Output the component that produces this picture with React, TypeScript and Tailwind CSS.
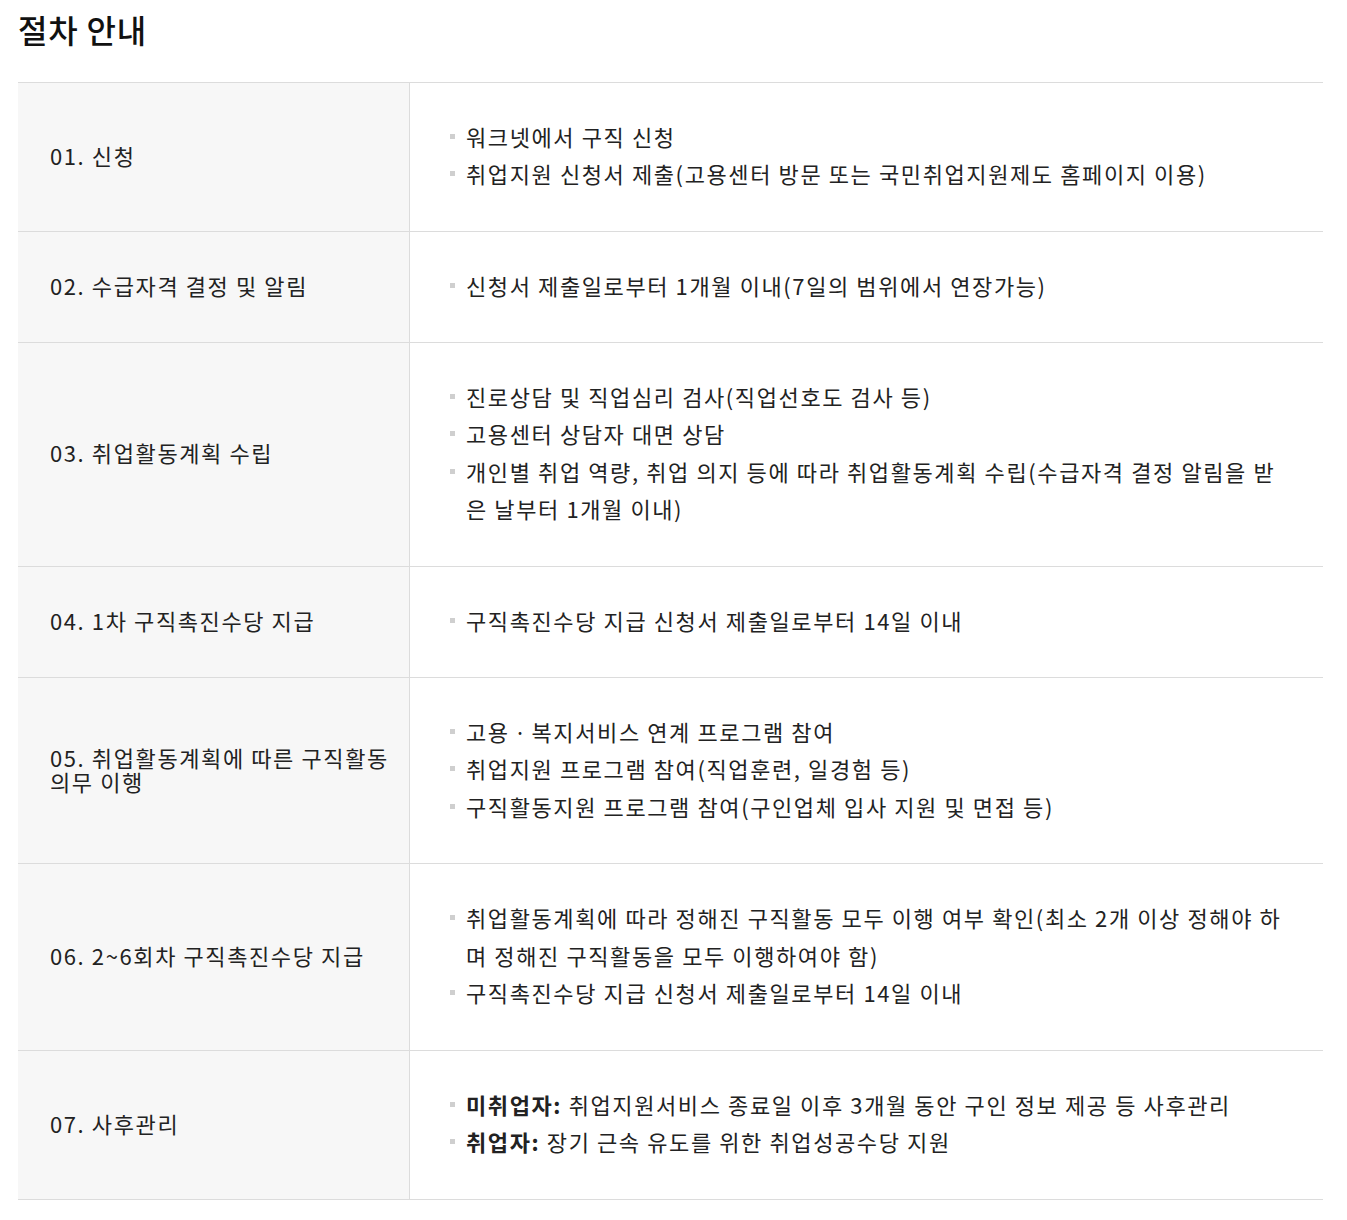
import React from 'react';

type Item = { bold?: string; text: string };
type Step = { title: string; items: Item[] };

const steps: Step[] = [
  {
    title: '01. 신청',
    items: [
      { text: '워크넷에서 구직 신청' },
      { text: '취업지원 신청서 제출(고용센터 방문 또는 국민취업지원제도 홈페이지 이용)' },
    ],
  },
  {
    title: '02. 수급자격 결정 및 알림',
    items: [{ text: '신청서 제출일로부터 1개월 이내(7일의 범위에서 연장가능)' }],
  },
  {
    title: '03. 취업활동계획 수립',
    items: [
      { text: '진로상담 및 직업심리 검사(직업선호도 검사 등)' },
      { text: '고용센터 상담자 대면 상담' },
      {
        text: '개인별 취업 역량, 취업 의지 등에 따라 취업활동계획 수립(수급자격 결정 알림을 받은 날부터 1개월 이내)',
      },
    ],
  },
  {
    title: '04. 1차 구직촉진수당 지급',
    items: [{ text: '구직촉진수당 지급 신청서 제출일로부터 14일 이내' }],
  },
  {
    title: '05. 취업활동계획에 따른 구직활동 의무 이행',
    items: [
      { text: '고용ㆍ복지서비스 연계 프로그램 참여' },
      { text: '취업지원 프로그램 참여(직업훈련, 일경험 등)' },
      { text: '구직활동지원 프로그램 참여(구인업체 입사 지원 및 면접 등)' },
    ],
  },
  {
    title: '06. 2~6회차 구직촉진수당 지급',
    items: [
      {
        text: '취업활동계획에 따라 정해진 구직활동 모두 이행 여부 확인(최소 2개 이상 정해야 하며 정해진 구직활동을 모두 이행하여야 함)',
      },
      { text: '구직촉진수당 지급 신청서 제출일로부터 14일 이내' },
    ],
  },
  {
    title: '07. 사후관리',
    items: [
      { bold: '미취업자:', text: ' 취업지원서비스 종료일 이후 3개월 동안 구인 정보 제공 등 사후관리' },
      { bold: '취업자:', text: ' 장기 근속 유도를 위한 취업성공수당 지원' },
    ],
  },
];

export default function App() {
  return (
    <div
      className="min-h-[1220px] bg-white text-[#222]"
      style={{ fontFamily: '"Noto Sans CJK KR", "Noto Sans", sans-serif' }}
    >
      <div className="ml-[18px] w-[1305px] pt-[9px]">
        <h2 className="text-[32px] leading-[40px] font-medium text-[#111] tracking-[0.8px]">절차 안내</h2>

        <div className="mt-[33px] border-t border-[#dcdcdc]">
          {steps.map((step) => (
            <div key={step.title} className="flex border-b border-[#dcdcdc]">
              <div className="w-[392px] shrink-0 bg-[#f7f7f7] border-r border-[#dcdcdc] flex items-center pl-[32px] pr-[16px] pb-[4px]">
                <span className="text-[22px] leading-[24px] tracking-[1.6px] text-[#222]">{step.title}</span>
              </div>
              <ul className="flex-1 pl-[40px] pr-[34px] pt-[34.8px] pb-[38px]">
                {step.items.map((item, i) => (
                  <li key={i} className="flex text-[22px] leading-[37.5px] tracking-[1.6px] text-[#222]">
                    <span className="w-[16px] shrink-0 flex pt-[16px]">
                      <span className="block w-[5px] h-[5px] bg-[#cfcfcf]" />
                    </span>
                    <span>
                      {item.bold && <strong className="font-bold">{item.bold}</strong>}
                      {item.text}
                    </span>
                  </li>
                ))}
              </ul>
            </div>
          ))}
        </div>
      </div>
    </div>
  );
}
